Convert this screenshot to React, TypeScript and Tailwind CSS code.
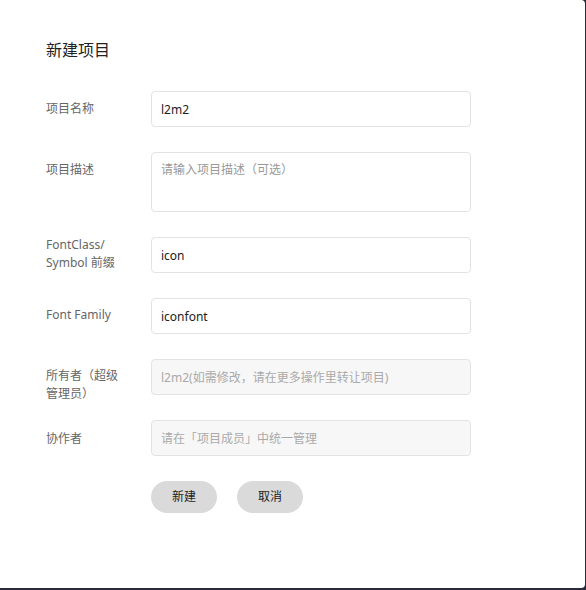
import React from "react";

const font = { fontFamily: '"Noto Sans", "Noto Sans CJK SC", sans-serif' };

function Row({
  label,
  labelClass = "pt-[9px]",
  children,
}: {
  label: React.ReactNode;
  labelClass?: string;
  children: React.ReactNode;
}) {
  return (
    <div className="flex items-start mb-[25px]">
      <div className={`w-[105px] h-[36px] shrink-0 text-[12px] leading-[18px] text-[#666] ${labelClass}`}>{label}</div>
      {children}
    </div>
  );
}

const inputBase =
  "w-[320px] h-[36px] rounded-[4px] border border-[#e3e3e3] px-[9px] text-[12px] outline-none";

export default function App() {
  return (
    <div className="w-[586px] h-[590px] bg-[#2a2a3a] overflow-hidden" style={font}>
      <div className="w-[585px] h-[588px] bg-white rounded-r-[4px] pl-[46px] pt-[40px]">
        <h2 className="text-[16px] leading-[20px] text-[#222] mb-[31px]">新建项目</h2>

        <Row label="项目名称">
          <input className={`${inputBase} text-[#222]`} defaultValue="l2m2" readOnly />
        </Row>

        <Row label="项目描述">
          <textarea
            className="w-[320px] h-[60px] rounded-[4px] border border-[#e3e3e3] px-[9px] pt-[8px] text-[12px] leading-[18px] outline-none resize-none placeholder:text-[#999]"
            placeholder="请输入项目描述（可选）"
          />
        </Row>

        <Row label={<>FontClass/<br />Symbol 前缀</>} labelClass="mt-[-1px]">
          <input className={`${inputBase} text-[#222]`} defaultValue="icon" readOnly />
        </Row>

        <Row label="Font Family" labelClass="pt-[8px]">
          <input className={`${inputBase} text-[#222]`} defaultValue="iconfont" readOnly />
        </Row>

        <Row label={<>所有者（超级<br />管理员）</>} labelClass="pt-[8px]">
          <input
            className={`${inputBase} bg-[#f7f7f7] placeholder:text-[#aaa]`}
            placeholder="l2m2(如需修改，请在更多操作里转让项目)"
            disabled
          />
        </Row>

        <Row label="协作者" labelClass="pt-[10px]">
          <input
            className={`${inputBase} bg-[#f7f7f7] placeholder:text-[#aaa]`}
            placeholder="请在「项目成员」中统一管理"
            disabled
          />
        </Row>

        <div className="flex gap-[20px] pl-[105px]">
          <button className="w-[66px] h-[32px] rounded-full bg-[#dadada] text-[12px] text-[#222]">新建</button>
          <button className="w-[66px] h-[32px] rounded-full bg-[#dadada] text-[12px] text-[#222]">取消</button>
        </div>
      </div>
    </div>
  );
}
